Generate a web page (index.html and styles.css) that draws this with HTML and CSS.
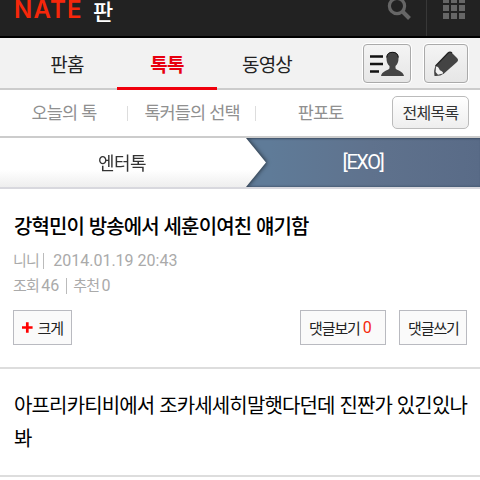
FILE: index.html
```html
<!DOCTYPE html>
<html lang="ko">
<head>
  <meta charset="UTF-8">
  <meta name="viewport" content="width=device-width, initial-scale=1">
  <title>네이트 판</title>
  <link rel="stylesheet" href="styles.css">
</head>
<body>

<header class="header">
  <h1 class="logo"><span class="nate">NATE</span><span class="pann">판</span></h1>
  <a class="search">
    <svg width="26" height="28" viewBox="0 0 26 28"><circle cx="11" cy="13" r="7.6" fill="none" stroke="#666" stroke-width="3.2"/><path d="M16.5 18.5L23.5 25.5" stroke="#666" stroke-width="4"/></svg>
  </a>
  <a class="apps">
    <svg width="22" height="22" viewBox="0 0 22 22" fill="#666"><path d="M0 0h6v6H0zM8 0h6v6H8zM16 0h6v6h-6zM0 8h6v6H0zM8 8h6v6H8zM16 8h6v6h-6zM0 16h6v6H0zM8 16h6v6H8zM16 16h6v6h-6z"/></svg>
  </a>
</header>

<nav class="tabs">
  <a class="tab">판홈</a>
  <a class="tab on">톡톡</a>
  <a class="tab">동영상</a>
  <div class="tools">
    <button class="tool tool-my">
      <svg width="34" height="26" viewBox="0 0 34 26"><path d="M0 5.5h13M0 13h13M0 20.5h9" stroke="#111" stroke-width="2.4"/><path d="M22.5 1c-4 0-6 2.400-6 6.500 0 3.500 1.200 6 3 7.500v2.200c-.7 2-8 3-8.500 7.800h23c-.5-4.800-7.800-5.800-8.500-7.800V15c1.800-1.500 3-4 3-7.500C28.500 3.400 26.500 1 22.500 1z" fill="#444"/><path d="M16.700 6.500C17 2.800 19 1.300 22.500 1.300s5.500 1.500 5.800 5.200" fill="none" stroke="#111" stroke-width="1"/></svg>
    </button>
    <button class="tool tool-write">
      <svg width="26" height="26" viewBox="0 0 26 26"><path d="M1.500 25Q.500 19 2.500 15L15 2q2-2 4 0l5 5q2 2 0 4L11 22.500q-4 3-9.500 2.500z" fill="#444"/><path d="M3 15.500Q5 15 6 17.500q.5 2 2.500 2.500 2 1 1.500 2.500L5 23.700 2.600 21z" fill="#f0f0f0"/><path d="M2.500 15L15 2q2-2 4 0" fill="none" stroke="#222" stroke-width="1.200"/></svg>
    </button>
  </div>
</nav>

<nav class="subnav">
  <a class="sub sub-today">오늘의 톡</a>
  <a class="sub sub-pick">톡커들의 선택</a>
  <a class="sub sub-photo">판포토</a>
  <button class="btn-all">전체목록</button>
</nav>

<div class="category">
  <div class="arrow"><a class="cate">엔터톡</a></div>
  <a class="channel">[EXO]</a>
</div>

<article>
  <div class="view-head">
    <h2 class="title">강혁민이 방송에서 세훈이여친 얘기함</h2>
    <p class="meta"><span>니니</span><i class="bar name-bar"></i><span class="date">2014.01.19 20:43</span></p>
    <p class="meta"><span>조회</span><span class="num">46</span><i class="bar hit-bar"></i><span>추천</span><span class="num">0</span></p>
    <div class="buttons">
      <button class="btn btn-zoom"><svg width="11" height="11" viewBox="0 0 11 11"><path d="M5.500 0v11M0 5.500h11" stroke="#f00" stroke-width="2.800"/></svg>크게</button>
      <button class="btn btn-view">댓글보기<em>0</em></button>
      <button class="btn btn-reply">댓글쓰기</button>
    </div>
  </div>
  <div class="content">아프리카티비에서 조카세세히말햇다던데 진짠가 있긴있나봐</div>
</article>

</body>
</html>
```
FILE: styles.css
```css
* {
  box-sizing: border-box;
}

body {
  margin: 0;
  background: #fff;
  color: #000;
  font-family: "Noto Sans CJK KR", sans-serif;
  overflow: hidden;
}

h1, h2, p {
  margin: 0;
  font-weight: normal;
}

svg {
  display: block;
}

button {
  margin: 0;
  padding: 0;
  font-family: inherit;
}

/* Header */
.header {
  display: flex;
  height: 38px;
  background: #222;
  border-bottom: 2px solid #000;
}

.logo {
  display: flex;
  flex: 1;
  padding-left: 14px;
}

.nate {
  width: 79px;
  color: #f5270b;
  font-family: Inter, sans-serif;
  font-size: 24px;
  font-weight: 600;
  letter-spacing: 1.2px;
  line-height: 19px;
}

.pann {
  color: #fff;
  font-size: 22px;
  font-weight: 500;
  line-height: 20px;
}

.search {
  width: 40px;
  margin-top: -7px;
}

.apps {
  width: 54px;
  padding-left: 16px;
  border-left: 1px solid #383838;
}

.apps svg {
  margin-top: -3px;
}

/* Main tabs */
.tabs {
  display: flex;
  height: 52px;
  background: #f2f2f2;
  border-bottom: 2px solid #ccc;
}

.tab {
  width: 100px;
  height: 52px;
  line-height: 52px;
  text-align: center;
  font-size: 19px;
  letter-spacing: -0.8px;
  color: #222;
}

.tab:first-child {
  width: 117px;
  padding-left: 17px;
}

.tab.on {
  color: #e8000f;
  font-weight: 700;
  border-bottom: 3px solid #f0000c;
}

.tools {
  display: flex;
  gap: 13px;
  margin-left: auto;
  padding: 6px 12px 0 0;
}

.tool {
  display: flex;
  align-items: center;
  justify-content: center;
  height: 39px;
  border: 1px solid #aaa;
  border-radius: 4px;
  background: linear-gradient(#f4f4f4, #e6e6e6);
  box-shadow: 0 0 0 1px #fff;
}

.tool-my {
  width: 48px;
}

.tool-write {
  width: 44px;
}

/* Sub navigation */
.subnav {
  display: flex;
  align-items: center;
  height: 48px;
  border-bottom: 2px solid #ccc;
}

.sub {
  height: 15px;
  line-height: 12px;
  text-align: center;
  font-size: 17.5px;
  letter-spacing: -0.9px;
  color: #909090;
}

.sub-today {
  width: 128px;
  padding-left: 1px;
  border-right: 1px solid #ddd;
}

.sub-pick {
  width: 128px;
  padding-left: 1px;
  border-right: 1px solid #ddd;
}

.sub-photo {
  width: 129px;
}

.btn-all {
  width: 77px;
  height: 33px;
  margin: -2px 0 0 7px;
  border: 1px solid #bbb;
  border-radius: 5px;
  background: linear-gradient(#fff, #eee);
  color: #333;
  font-size: 16px;
  letter-spacing: -0.7px;
}

/* Category path */
.category {
  display: flex;
  height: 51px;
  border-bottom: 2px solid #d8d8de;
  background: linear-gradient(90deg, #5f7b98 270px, #5f728d 370px, #596b87);
  box-shadow: inset 0 2px 2px -1px #3c4e65, inset 0 -2px 2px -1px #4a5e77;
  line-height: 49px;
}

.arrow {
  filter: drop-shadow(1px 0 2px rgba(0, 0, 0, 0.6));
  clip-path: inset(0 -8px 0 0);
}

.cate {
  display: block;
  width: 266px;
  height: 49px;
  padding-right: 22px;
  text-align: center;
  font-size: 18px;
  letter-spacing: -0.5px;
  color: #333;
  background: linear-gradient(#fff 65%, #eee);
  clip-path: polygon(0 0, 246px 0, 100% 50%, 246px 100%, 0 100%);
}

.channel {
  flex: 1;
  padding-right: 20px;
  text-align: center;
  color: #fff;
  font-family: Roboto, "Noto Sans CJK KR", sans-serif;
  font-size: 20px;
  font-weight: 400;
  letter-spacing: -1.4px;
}

/* Post */
.view-head {
  height: 180px;
  padding: 22px 13px 0;
  border-bottom: 2px solid #ddd;
}

.title {
  height: 36px;
  padding-left: 1px;
  line-height: 30px;
  font-size: 20px;
  font-weight: 500;
  letter-spacing: -0.88px;
  white-space: nowrap;
}

.meta {
  display: flex;
  align-items: center;
  height: 25px;
  font-size: 15px;
  letter-spacing: -0.7px;
  color: #aaa;
}

.bar {
  width: 1px;
  height: 16px;
  background: #bbb;
}

.name-bar {
  margin: 2px 9px 0 4px;
}

.hit-bar {
  margin: 2px 6px 0 7px;
}

.date, .num {
  padding-top: 2px;
  font-family: Roboto, sans-serif;
  font-size: 16px;
  letter-spacing: 0;
}

.num {
  margin-left: 2px;
}

.buttons {
  display: flex;
  margin-top: 13px;
}

.btn {
  display: flex;
  align-items: center;
  height: 35px;
  padding: 0 8px;
  border: 1px solid #b9bac0;
  background: #fafafa;
  color: #222;
  font-size: 15px;
  letter-spacing: -1.1px;
  white-space: nowrap;
}

.btn-zoom {
  width: 59px;
  margin-right: auto;
}

.btn-zoom svg {
  margin-right: 5px;
}

.btn-view {
  width: 86px;
  margin-right: 13px;
}

.btn-view em {
  margin-left: 3px;
  color: #f5270b;
  font-family: Roboto, sans-serif;
  font-size: 16px;
  font-style: normal;
}

.btn-reply {
  width: 68px;
}

.content {
  height: 108px;
  padding: 19px 8px 0 14px;
  border-bottom: 2px solid #ddd;
  font-size: 20px;
  line-height: 33px;
  letter-spacing: -0.85px;
  word-break: break-all;
}
```
